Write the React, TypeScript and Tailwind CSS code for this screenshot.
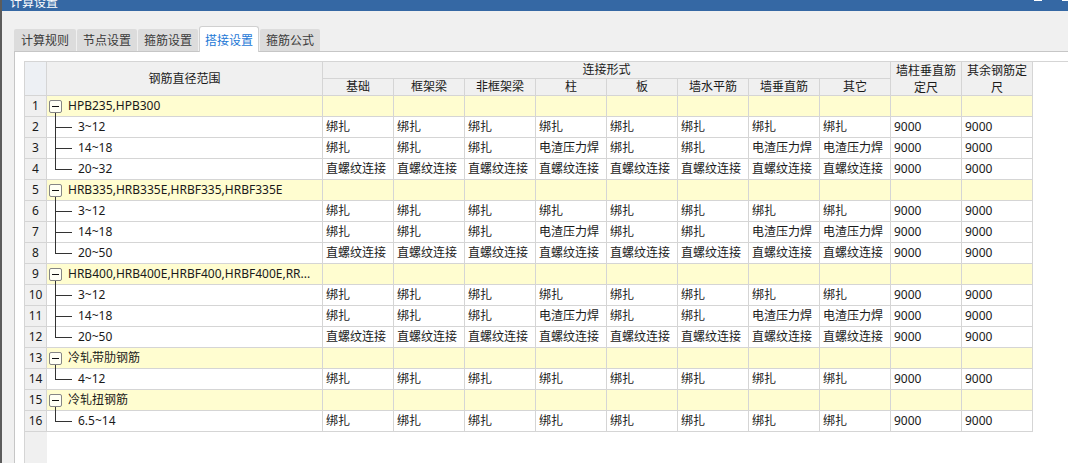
import React from "react";

const B = "绑扎";
const D = "电渣压力焊";
const Z = "直螺纹连接";
const N = "9000";
const r312 = [B, B, B, B, B, B, B, B, N, N];
const r1418 = [B, B, B, D, B, B, D, D, N, N];
const rZ = [Z, Z, Z, Z, Z, Z, Z, Z, N, N];

type Row = { group?: string; label?: string; last?: boolean; vals?: string[] };

const rows: Row[] = [
  { group: "HPB235,HPB300" },
  { label: "3~12", vals: r312 },
  { label: "14~18", vals: r1418 },
  { label: "20~32", vals: rZ, last: true },
  { group: "HRB335,HRB335E,HRBF335,HRBF335E" },
  { label: "3~12", vals: r312 },
  { label: "14~18", vals: r1418 },
  { label: "20~50", vals: rZ, last: true },
  { group: "HRB400,HRB400E,HRBF400,HRBF400E,RR..." },
  { label: "3~12", vals: r312 },
  { label: "14~18", vals: r1418 },
  { label: "20~50", vals: rZ, last: true },
  { group: "冷轧带肋钢筋" },
  { label: "4~12", vals: r312, last: true },
  { group: "冷轧扭钢筋" },
  { label: "6.5~14", vals: r312, last: true },
];

const subCols = ["基础", "框架梁", "非框架梁", "柱", "板", "墙水平筋", "墙垂直筋", "其它"];

function GroupIcon() {
  return (
    <svg width="21" height="20" overflow="visible" className="shrink-0 block">
      <rect x="2.5" y="4.5" width="12" height="12" rx="1.5" fill="#fffff4" stroke="#858585" />
      <line x1="5" y1="10.5" x2="12" y2="10.5" stroke="#111" />
      <line x1="8.5" y1="17" x2="8.5" y2="21" stroke="#333" />
    </svg>
  );
}

function ChildIcon({ last }: { last?: boolean }) {
  return (
    <svg width="31" height="20" overflow="visible" className="shrink-0 block">
      <line x1="8.5" y1="-1" x2="8.5" y2={last ? 11 : 21} stroke="#333" />
      <line x1="8.5" y1="10.5" x2="25" y2="10.5" stroke="#333" />
    </svg>
  );
}

const tabs = ["计算规则", "节点设置", "箍筋设置", "搭接设置", "箍筋公式"];
const tabW = ["w-[62px]", "w-[60px]", "w-[60px]", "w-[60px]", "w-[60px]"];

export default function App() {
  return (
    <div className="w-[1068px] h-[463px] overflow-hidden flex bg-[#f0f0f0] text-[12px] text-[#1a1a1a] [font-family:'Noto_Sans','Noto_Sans_CJK_SC',sans-serif]">
      <div className="w-[2px] shrink-0 bg-[#5c5c5c]" />
      <div className="flex-1 flex flex-col min-w-0">
        <div className="h-[11px] shrink-0 bg-[#3568a4] flex overflow-hidden">
          <span className="pl-[8px] -mt-[6px] leading-[16px] text-white [font-family:'Noto_Sans_CJK_SC',sans-serif]">计算设置</span>
          <div className="ml-auto flex items-start">
            <div className="w-[8px] h-px bg-white" />
            <div className="w-[20px]" />
            <div className="w-[6px] h-px bg-white" />
          </div>
        </div>
        <div className="flex-1 flex flex-col pl-[12px] pt-[15px]">
          <div className="h-[25px] flex items-end gap-px shrink-0">
            {tabs.map((t, i) =>
              i === 3 ? (
                <div
                  key={t}
                  className={`${tabW[i]} relative z-10 -mb-px h-[26px] bg-white border border-b-0 border-[#d0d0d0] rounded-t-[3px] flex items-center justify-center text-[#1d78d6] [font-family:'Noto_Sans_CJK_SC',sans-serif]`}
                >
                  {t}
                </div>
              ) : (
                <div
                  key={t}
                  className={`${tabW[i]} h-[22px] bg-[#dcdcdc] rounded-t-[2px] flex items-center justify-center text-[#3a3a3a] [font-family:'Noto_Sans_CJK_SC',sans-serif]`}
                >
                  {t}
                </div>
              )
            )}
          </div>
          <div className="flex-1 border-t border-l border-[#c6c6c6] bg-white pl-[9px] pt-[9px] flex flex-col">
            <div className="flex-1 flex flex-col border-t border-l border-[#d5d5d5]">
              {/* header */}
              <div className="flex shrink-0">
                <div className="w-[22px] h-[34px] border-r border-b border-[#d5d5d5] bg-[#edf0f4]" />
                <div className="w-[276px] h-[34px] border-r border-b border-[#d5d5d5] bg-[#f0f0f0] flex items-center justify-center">
                  钢筋直径范围
                </div>
                <div className="w-[568px] flex flex-col">
                  <div className="h-[17px] border-r border-b border-[#d5d5d5] bg-[#f0f0f0] flex items-center justify-center leading-[16px]">
                    连接形式
                  </div>
                  <div className="flex">
                    {subCols.map((c) => (
                      <div
                        key={c}
                        className="w-[71px] h-[17px] border-r border-b border-[#d5d5d5] bg-[#f0f0f0] flex items-center justify-center leading-[16px]"
                      >
                        {c}
                      </div>
                    ))}
                  </div>
                </div>
                <div className="w-[71px] h-[34px] border-r border-b border-[#d5d5d5] bg-[#f0f0f0] px-[2px] text-center leading-[17px]">
                  墙柱垂直筋定尺
                </div>
                <div className="w-[71px] h-[34px] border-r border-b border-[#d5d5d5] bg-[#f0f0f0] px-[2px] text-center leading-[17px]">
                  其余钢筋定尺
                </div>
              </div>
              {/* rows */}
              {rows.map((r, i) => {
                const yellow = !!r.group;
                const cellBg = yellow ? "bg-[#fffdd0]" : "bg-white";
                return (
                  <div key={i} className="flex h-[21px] shrink-0">
                    <div className="w-[22px] h-[21px] border-r border-b border-[#d5d5d5] bg-[#f0f0f0] text-center leading-[20px]">
                      {i + 1}
                    </div>
                    <div
                      className={`w-[276px] h-[21px] border-r border-b border-[#d5d5d5] ${cellBg} flex items-start whitespace-nowrap leading-[20px]`}
                    >
                      {r.group ? (
                        <>
                          <GroupIcon />
                          <span>{r.group}</span>
                        </>
                      ) : (
                        <>
                          <ChildIcon last={r.last} />
                          <span>{r.label}</span>
                        </>
                      )}
                    </div>
                    {Array.from({ length: 10 }).map((_, j) => (
                      <div
                        key={j}
                        className={`w-[71px] h-[21px] border-r border-b border-[#d5d5d5] ${cellBg} pl-[3px] leading-[20px] whitespace-nowrap overflow-hidden`}
                      >
                        {r.vals ? r.vals[j] : ""}
                      </div>
                    ))}
                  </div>
                );
              })}
              <div className="flex-1 flex">
                <div className="w-[22px] bg-[#f0f0f0]" />
              </div>
            </div>
          </div>
        </div>
      </div>
    </div>
  );
}
